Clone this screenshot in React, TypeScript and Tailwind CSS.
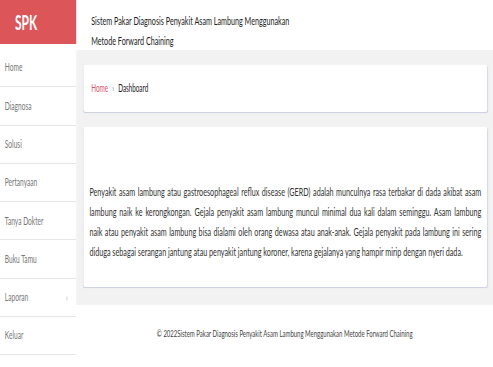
import React from "react";

const menu = ["Home", "Diagnosa", "Solusi", "Pertanyaan", "Tanya Dokter", "Buku Tamu", "Laporan", "Keluar"];

const lines = [
  "Penyakit asam lambung atau gastroesophageal reflux disease (GERD) adalah munculnya rasa terbakar di dada akibat asam",
  "lambung naik ke kerongkongan. Gejala penyakit asam lambung muncul minimal dua kali dalam seminggu. Asam lambung",
  "naik atau penyakit asam lambung bisa dialami oleh orang dewasa atau anak-anak. Gejala penyakit pada lambung ini sering",
];
const lastLine = "diduga sebagai serangan jantung atau penyakit jantung koroner, karena gejalanya yang hampir mirip dengan nyeri dada.";

export default function App() {
  return (
    <div className="w-[493px] h-[367px] overflow-hidden bg-white">
      <div
        className="w-[822px] h-[367px] origin-top-left scale-x-[0.6] flex text-[#333]"
        style={{ fontFamily: "Lato, 'Liberation Sans', sans-serif" }}
      >
        {/* Sidebar */}
        <div className="w-[127px] shrink-0 flex flex-col bg-white">
          <div className="h-[44px] bg-[#dc5559] flex items-center pl-[25px]">
            <span className="text-white font-bold text-[20px] leading-none">SPK</span>
          </div>
          <div className="h-[5px]" />
          {menu.map((m) => (
            <div
              key={m}
              className="h-[38.3px] border-b border-[#e6e6e6] flex items-center justify-between pl-[8px] pr-[14px] text-[11px] text-[#777]"
            >
              <span>{m}</span>
              {m === "Laporan" && <span className="text-[10px] text-[#999]">‹</span>}
            </div>
          ))}
        </div>
        {/* Main */}
        <div className="flex-1 flex flex-col">
          <div className="h-[50px] shrink-0 pl-[25px] pt-[11px] text-[12px] leading-[20px] text-[#222]">
            Sistem Pakar Diagnosis Penyakit Asam Lambung Menggunakan
            <br />
            Metode Forward Chaining
          </div>
          <div className="h-[255px] shrink-0 bg-[#f2f2f2] pt-[15px] pl-[12px] pr-[10px] flex flex-col gap-[15px]">
            <div className="h-[47px] bg-white rounded-[3px] shadow-[0_1px_1px_rgba(180,185,210,0.6)] flex items-center pl-[13px] text-[10.5px]">
              <span className="text-[#d9536f]">Home</span>
              <span className="text-[#777] mx-[7px]">›</span>
              <span className="text-[#222]">Dashboard</span>
            </div>
            <div className="h-[160px] bg-white rounded-[3px] shadow-[0_1px_1px_rgba(180,185,210,0.6)] pt-[55px] px-[10px] text-[12px] leading-[20px] text-[#333]">
              {lines.map((l) => (
                <div key={l} className="text-justify [text-align-last:justify] whitespace-nowrap">
                  {l}
                </div>
              ))}
              <div className="whitespace-nowrap">{lastLine}</div>
            </div>
          </div>
          <div className="flex-1 flex items-center justify-center pb-[6px] text-[10px] text-[#444]">
            © 2022Sistem Pakar Diagnosis Penyakit Asam Lambung Menggunakan Metode Forward Chaining
          </div>
        </div>
      </div>
    </div>
  );
}
